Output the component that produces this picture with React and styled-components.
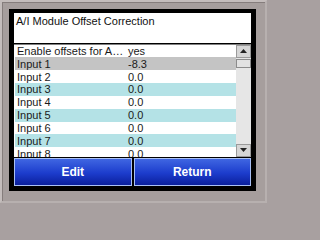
import React from "react";
import styled, { createGlobalStyle } from "styled-components";

const Global = createGlobalStyle`
  html, body { margin: 0; padding: 0; background: #a8a0a0; }
  body { width: 267px; height: 203px; overflow: hidden; font-family: "Liberation Sans", Arial, sans-serif; }
`;

const Frame = styled.div`
  box-sizing: border-box;
  width: 267px;
  height: 203px;
  background: #a69e9d;
  border-top: 2px solid #c4bdbc;
  border-left: 2px solid #c4bdbc;
  border-right: 2px solid #b7b0af;
  border-bottom: 2px solid #b7b0af;
  padding: 7px 6px 9px 7px;
  box-shadow: inset 1px 1px 0 #857d7c;
`;

const Screen = styled.div`
  box-sizing: border-box;
  width: 247px;
  height: 182px;
  background: #000;
  padding: 4px 5px 5px 5px;
  display: flex;
  flex-direction: column;
  gap: 1px;
`;

const Title = styled.div`
  height: 30px;
  background: #fff;
  color: #111;
  font-size: 11px;
  line-height: 13px;
  padding: 2px 0 0 2px;
  box-sizing: border-box;
  white-space: nowrap;
`;

const List = styled.div`
  height: 113px;
  display: flex;
  background: #fff;
  border-top: 1px solid #808080;
  box-sizing: border-box;
`;

const Rows = styled.div`
  flex: 1;
  overflow: hidden;
  padding-left: 1px;
`;

const Row = styled.div`
  display: flex;
  height: 12.85px;
  align-items: center;
  background: ${(p) => p.$bg};
  color: #1a1a1a;
  font-size: 11px;
`;

const Name = styled.div`
  width: 109px;
  padding-left: 2px;
  overflow: hidden;
  text-overflow: ellipsis;
  white-space: nowrap;
  margin-right: 2px;
`;

const Value = styled.div`
  flex: 1;
  white-space: nowrap;
`;

const Scrollbar = styled.div`
  width: 15px;
  display: flex;
  flex-direction: column;
  background-color: #e6e6e6;
  background-image: radial-gradient(#cfcfcf 0.6px, transparent 0.7px);
  background-size: 2px 2px;
`;

const ArrowBtn = styled.div`
  box-sizing: border-box;
  height: 13px;
  background: #d6d6d6;
  border: 1px solid #9a9a9a;
  display: flex;
  align-items: center;
  justify-content: center;
`;

const Thumb = styled.div`
  box-sizing: border-box;
  height: 9px;
  margin-top: 1px;
  background: #e2e2e2;
  border: 1px solid #8c8c8c;
`;

const Spacer = styled.div`
  flex: 1;
`;

const Buttons = styled.div`
  height: 29px;
  display: flex;
  gap: 2px;
`;

const Button = styled.div`
  flex: 1;
  box-sizing: border-box;
  border: 1px solid #a9c0f4;
  background: linear-gradient(#3f66e2, #1c3ccc 55%, #0b1f9c);
  color: #fff;
  font-weight: bold;
  font-size: 12px;
  display: flex;
  align-items: center;
  justify-content: center;
`;

const Tri = ({ down }) => (
  <svg width="7" height="4" viewBox="0 0 7 4">
    <polygon points={down ? "0,0 7,0 3.5,4" : "0,4 7,4 3.5,0"} fill="#222" />
  </svg>
);

const rows = [
  ["Enable offsets for Analog Inputs", "yes", "#fff"],
  ["Input 1", "-8.3", "#c4c4c4"],
  ["Input 2", "0.0", "#fff"],
  ["Input 3", "0.0", "#b4e2e6"],
  ["Input 4", "0.0", "#fff"],
  ["Input 5", "0.0", "#b4e2e6"],
  ["Input 6", "0.0", "#fff"],
  ["Input 7", "0.0", "#b4e2e6"],
  ["Input 8", "0.0", "#fff"],
];

export default function App() {
  return (
    <>
      <Global />
      <Frame>
        <Screen>
          <Title>A/I Module Offset Correction</Title>
          <List>
            <Rows>
              {rows.map(([n, v, bg]) => (
                <Row key={n} $bg={bg}>
                  <Name>{n}</Name>
                  <Value>{v}</Value>
                </Row>
              ))}
            </Rows>
            <Scrollbar>
              <ArrowBtn><Tri /></ArrowBtn>
              <Thumb />
              <Spacer />
              <ArrowBtn><Tri down /></ArrowBtn>
            </Scrollbar>
          </List>
          <Buttons>
            <Button>Edit</Button>
            <Button>Return</Button>
          </Buttons>
        </Screen>
      </Frame>
    </>
  );
}
